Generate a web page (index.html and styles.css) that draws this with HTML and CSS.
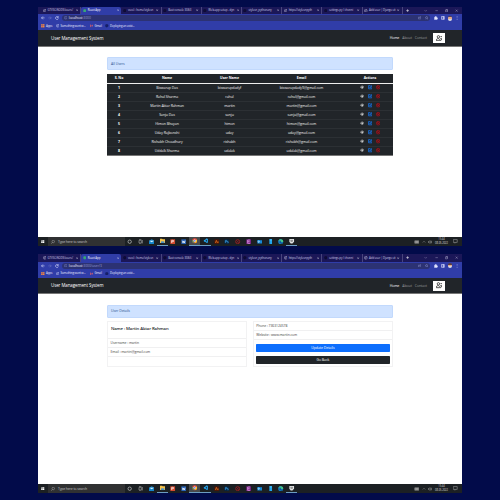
FILE: index.html
```html
<!DOCTYPE html>
<html lang="en">
<head>
<meta charset="utf-8">
<title>User Management System</title>
<link rel="stylesheet" href="styles.css">
</head>
<body>
<section class="window">
  <div class="browser" data-path=":3000"></div>
  <main class="page">
    <div class="alert">All Users</div>
    <table class="users">
      <thead><tr><th class="c-no">S. No</th><th class="c-name">Name</th><th class="c-user">User Name</th><th class="c-mail">Email</th><th>Actions</th></tr></thead>
      <tbody id="rows"></tbody>
    </table>
  </main>
  <footer class="taskbar"></footer>
</section>
<section class="window second">
  <div class="browser" data-path=":3000/user/3"></div>
  <main class="page">
    <div class="alert">User Details</div>
    <div class="cards">
      <div class="card">
        <h5>Name : Martin Aktar Rahman</h5>
        <p>Username : martin</p>
        <p>Email : martin@gmail.com</p>
      </div>
      <div class="card">
        <p>Phone : 7363124578</p>
        <p>Website : www.martin.com</p>
        <div class="buttons"><button class="primary">Update Details</button><button class="dark">Go Back</button></div>
      </div>
    </div>
  </main>
  <footer class="taskbar"></footer>
</section>
<script src="app.js"></script>
</body>
</html>
```
FILE: styles.css
```css
* { box-sizing: border-box; }
body { margin: 0; padding: 7px 38px; width: 500px; height: 500px; overflow: hidden; background: #020b4a; font-family: "Open Sans", "Noto Sans", sans-serif; font-size: 3.6px; letter-spacing: -.06px; line-height: 1; color: #444; display: flex; flex-direction: column; gap: 8px; }
.window { width: 424px; height: 239px; background: #fff; display: flex; flex-direction: column; }
svg { display: block; flex: none; fill: none; stroke: currentColor; stroke-width: 1.6; }
.tabs { height: 7px; background: #1b1758; color: #cfcde6; display: flex; align-items: center; padding-left: 3px; font-size: 2.8px; }
.second .tabs { height: 8px; }
.tab { width: 40.2px; height: 100%; display: flex; align-items: center; padding: 0 2px 0 1.5px; gap: 1.5px; border-right: .5px solid #48447c; }
.tab svg { width: 3.6px; height: 3.6px; }
.tab span { white-space: nowrap; line-height: 5px; }
.tab .x { width: 2.3px; height: 2.3px; margin-left: auto; stroke-width: 2.5; color: #fff; }
.tab.on { background: #303da8; color: #fff; border: 0; border-radius: 2px 2px 0 0; }
.tab .dim { color: #100d38; }
.tab .green { color: #39a778; }
.plus { width: 3.2px; height: 3.2px; margin-left: 3px; color: #fff; }
.win { display: flex; margin-left: auto; gap: 7px; padding-right: 3.5px; color: #d7d5ee; }
.win svg { width: 3.3px; height: 3.3px; }
.bar { height: 8px; background: #303da8; display: flex; align-items: center; padding-left: 3px; color: #e4e6ff; }
.second .bar { height: 7.5px; }
.bar > svg { width: 3.8px; height: 3.8px; margin-right: 3.2px; }
.bar .off { color: #8990d0; }
.omni { width: 368px; height: 6.4px; border-radius: 4px; background: #2c3273; display: flex; align-items: center; padding: 0 1.5px 0 2px; gap: 1.5px; color: #eceeff; font-size: 3.4px; }
.omni svg { width: 3.4px; height: 3.4px; color: #a0a6dc; }
.omni i { font-style: normal; color: #9599cc; margin-left: -1.5px; }
.omni .r { margin-left: auto; margin-right: 2.2px; }
.ext { display: flex; align-items: center; gap: 3.2px; margin-left: 4.3px; }
.ext svg { width: 3.8px; height: 3.8px; }
.avatar { width: 4px; height: 5px; border-radius: 2px; background: linear-gradient(#604039 30%, #e0a98f 30% 65%, #d8d8e0 65%); }
.marks { height: 8px; background: #303da8; color: #dde0ff; display: flex; align-items: center; padding-left: 3px; font-size: 2.9px; letter-spacing: -.12px; white-space: nowrap; }
.marks div { display: flex; align-items: center; gap: 1.5px; }
.marks svg { width: 3.5px; height: 3.5px; }
.marks .apps { width: 14.5px; color: #f06d55; }
.marks .some { width: 34px; }
.marks .gmail { width: 15.5px; color: #f06464; }
.marks span { color: #eceeff; }
.marks .gh svg { color: #172069; }
.nav { height: 16.5px; background: #212529; color: #ddd; display: flex; align-items: center; padding: .5px 17px 0 13px; border-bottom: .5px solid #777; }
.brand { font-size: 4.4px; color: #fff; }
.links { display: flex; gap: 3px; margin-left: auto; margin-right: 6px; color: #96989a; font-size: 3.5px; }
.links b { font-weight: 400; color: #fff; }
.add { width: 12px; height: 10px; background: #fff; display: flex; align-items: center; justify-content: center; color: #222; }
.add svg { width: 6.5px; height: 6.5px; stroke-width: 1.9; }
.page { flex: 1; padding: 10.5px 69px 0; }
.alert { height: 13px; background: #cfe2ff; border: .5px solid #c2d9fc; border-radius: 1px; color: #2c5390; padding-left: 3px; font-size: 3.5px; display: flex; align-items: center; }
.users { width: 286px; margin-top: 3.5px; border-collapse: separate; border-spacing: 0; table-layout: fixed; background: #212529; color: #f2f2f2; text-align: center; font-size: 3.5px; }
.users th, .users td { padding: 0; height: 9px; vertical-align: middle; }
.users th { height: 10px; color: #fff; border-bottom: 1px solid #eee; font-weight: 700; }
.users td { border-bottom: 1px solid #2c3034; }
.users tr:last-child td { border-bottom-color: #777; }
.c-no { width: 24px; } .c-name { width: 72px; } .c-user { width: 53px; } .c-mail { width: 91px; }
.users td:first-child { font-weight: 700; color: #fff; }
.acts { display: flex; justify-content: center; gap: 3.8px; color: #fff; }
.acts svg { width: 4.4px; height: 4.4px; }
.acts .edit { color: #1677f2; }
.acts .del { color: #e00812; stroke-width: 2; }
.cards { display: flex; gap: 5.5px; margin-top: 3.5px; }
.card { flex: 1; height: 46px; border: 1px solid #f2f2f3; }
.card h5 { margin: 0; height: 17px; padding: 4.2px 3px 0; font-size: 4.3px; letter-spacing: -.12px; font-weight: 600; color: #212529; border-bottom: 1px solid #f0f0f1; }
.card p { margin: 0; height: 9px; padding: 2.2px 2.5px; border-bottom: 1px solid #f0f0f1; white-space: nowrap; font-size: 3.4px; }
.buttons { padding: 4px 2.5px; display: flex; flex-direction: column; gap: 4px; }
.buttons button { height: 8px; border: 0; padding: 0; border-radius: .7px; color: #fff; font: 3.5px/8px "Open Sans", sans-serif; letter-spacing: -.05px; }
.primary { background: #0d6efd; } .dark { background: #212529; }
.taskbar { height: 9px; background: #1c2023; color: #ddd; display: flex; align-items: center; }
.start { width: 10px; padding-left: 3.3px; }
.start svg { width: 3.5px; height: 3.5px; fill: #fff; stroke: none; }
.search { width: 77px; height: 100%; background: #303132; color: #c8c8c8; display: flex; align-items: center; gap: 3px; padding-left: 3px; font-size: 3.4px; letter-spacing: -.12px; }
.search svg { width: 4px; height: 4px; }
.apps-row { display: flex; height: 100%; margin-left: -.5px; }
.app { width: 10.8px; display: flex; align-items: center; justify-content: center; }
.app svg { width: 5.4px; height: 5.4px; }
.app.run { border-bottom: .5px solid #6c9cc2; }
.app.cur { background: #484b4d; }
.tray { margin-left: auto; display: flex; align-items: center; gap: 2.5px; padding-right: 4.5px; color: #bbb; }
.tray svg { width: 4px; height: 4px; }
.tray .kb { width: 5.5px; }
.clock { width: 14px; text-align: center; font-size: 2.6px; line-height: 3.8px; white-space: nowrap; color: #ddd; }
.tray .chat { width: 4.5px; height: 4.5px; margin-left: 2px; }
```
FILE: app.js
```js
const svg = (body, cls = '') => `<svg class="${cls}" viewBox="0 0 16 16">${body}</svg>`;
const X = '<path d="M3 3l10 10M13 3L3 13"/>';
const GLOBE = '<circle cx="8" cy="8" r="6.5"/><path d="M2 6h5l2 3-3 2v3M10 2v3h4"/>';
const DISC = '<circle cx="8" cy="8" r="6.5" fill="currentColor"/>';
const GRID = '<path d="M1 1h6v6H1zM9 1h6v6H9zM1 9h6v6H1zM9 9h6v6H9z"/>';
const USER_EDIT = '<circle cx="6" cy="4.5" r="3"/><path d="M8 14H1v-2c0-3 5-4 7-2M9 14v-2.500l4-4 2 2L11.500 14zM11 4h4.500"/>';

const tabs = [
  ['GTVSC:NODE/users/', GLOBE, ''], ['React App', DISC, 'green'],
  ['vscol : home/stylesn', DISC, 'dim'], ['Bast console 308:3', DISC, 'dim'],
  ['Web-app setup - dyn', DISC, 'dim'], ['stylesn_pythonany', DISC, 'dim'],
  ['https://stylesnpyth', GLOBE, ''], ['settings.py / chonni', DISC, 'dim'],
  ['Add user | Django sit', GLOBE, '']
];

document.querySelectorAll('.browser').forEach(el => {
  el.innerHTML = `
  <div class="tabs">${tabs.map(([t, i, c], n) => `<div class="tab ${n === 1 ? 'on' : ''}">${svg(i, c)}<span>${t}</span>${svg(X, 'x')}</div>`).join('')}
    ${svg('<path stroke-width="2.5" d="M8 1v14M1 8h14"/>', 'plus')}
    <div class="win">${svg('<path d="M3 6l5 5 5-5"/>')}${svg('<path d="M2 8h12"/>')}${svg('<path d="M2 5h9v9H2zM5 5V2h9v9h-3"/>')}${svg(X)}</div></div>
  <div class="bar">${svg('<path stroke-width="2.4" d="M15 8H2M8 2L2 8l6 6"/>')}${svg('<path d="M1 8h13M8 2l6 6-6 6"/>', 'off')}${svg('<path stroke-width="2.4" d="M13 5a6 6 0 1 0 1 5M14 1v5H9"/>')}
    <div class="omni">${svg('<circle cx="8" cy="8" r="6.5"/><path d="M8 7v5M8 4v1.5"/>')}<span>localhost</span><i>${el.dataset.path}</i>${svg('<path d="M8 5H2v9h11v-4M5 11c0-5 3-6 8-6M10 2l4 3-4 3"/>', 'r')}${svg('<path d="M8 1l2 5 5 .5-4 3.500 1.200 5L8 12l-4.200 3L5 10 1 6.500 6 6z"/>')}</div>
    <div class="ext">${svg('<path fill="currentColor" d="M2 5h3c-1-5 6-5 5 0h3v4c4-1 4 5 0 4v2H2z"/>')}${svg('<path stroke-width="2.5" d="M2 2h12v12H2zM9 2v12M11 2v12"/>')}<div class="avatar"></div>${svg('<path stroke-width="3" stroke-dasharray="2 4" d="M9 1v14"/>')}</div></div>
  <div class="marks"><div class="apps">${svg(GRID.replace('/>', ' fill="#e9a83b"/>'))}<span>Apps</span></div><div class="some">${svg(GLOBE)}<span>Something went w...</span></div><div class="gmail">${svg('<path stroke-width="3" d="M2 14V4l6 5 6-5v10"/>')}<span>Gmail</span></div><div class="gh">${svg(DISC)}<span>Deploying an exist...</span></div></div>
  <nav class="nav"><div class="brand">User Management System</div><div class="links"><b>Home</b><span>About</span><span>Contact</span></div><div class="add">${svg(USER_EDIT)}</div></nav>`;
});

const users = [
  ['Biswarup Das', 'biswarupdadyf', 'biswarupdady9@gmail.com'],
  ['Rahul Sharma', 'rahul', 'rahul@gmail.com'],
  ['Martin Aktar Rahman', 'martin', 'martin@gmail.com'],
  ['Sanju Das', 'sanju', 'sanju@gmail.com'],
  ['Himon Bhuyan', 'himon', 'himon@gmail.com'],
  ['Uday Rajbonshi', 'uday', 'uday@gmail.com'],
  ['Rishabh Choudhury', 'rishabh', 'rishabh@gmail.com'],
  ['Uddalk Sharma', 'udalak', 'udalak@gmail.com']
];
const actions = svg('<path d="M1 8c4-6 10-6 14 0-4 6-10 6-14 0z"/><circle cx="8" cy="8" r="2" fill="currentColor"/>')
  + svg('<path stroke-width="2.600" d="M8 2H2v12h12V8M6 10l1-4 6-5 2 2-5 6z"/>', 'edit')
  + svg('<circle cx="8" cy="8" r="6.500"/><path d="M4.500 4.500l7 7M11.500 4.500l-7 7"/>', 'del');
document.getElementById('rows').innerHTML = users.map((u, i) =>
  `<tr><td>${i + 1}</td>${u.map(v => `<td>${v}</td>`).join('')}<td><div class="acts">${actions}</div></td></tr>`).join('');

const tile = (bg, mark, fg = '#fff') => `<rect x="1" y="1" width="14" height="14" fill="${bg}" stroke="none"/><path stroke="${fg}" stroke-width="2" d="${mark}"/>`;
const apps = [
  ['<circle cx="8" cy="8" r="5" stroke="#eee"/>', ''],
  ['<path stroke="#bbb" d="M3 4h7v8H3zM13 3v10M3 1h7M3 15h7"/>', ''],
  ['<path stroke="none" fill="#1685c9" d="M0 5l8-4 8 4v10H0z"/><path stroke="none" fill="#d9f2ff" d="M1 5h14l-7 5z"/>', ''],
  ['<path stroke="none" fill="#f6c34c" d="M0 2h6l2 2h8v11H0z"/><path stroke="none" fill="#478fc5" d="M3 10h10v5H3z"/>', 'run'],
  [tile('#d44a2e', 'M5 12V4h4a2 2 0 0 1 0 4H5'), ''],
  [tile('#2862b5', 'M4 5l2 7 2-6 2 6 2-7'), ''],
  ['<circle cx="8" cy="8" r="7.500" fill="#e84435" stroke="none"/><path stroke="none" fill="#38a556" d="M1 5l7 10C1 15-1 9 1 5"/><path stroke="none" fill="#fbc116" d="M15 5c2 6-2 10-7 10l4-10z"/><circle cx="8" cy="8" r="3" fill="#4285f4" stroke="#fff"/>', 'cur run'],
  ['<path stroke="#23a4ee" stroke-width="3" d="M12 2L3 10M12 14L3 6M13 2v12"/>', 'run'],
  [tile('#481609', 'M4 12l3-8 3 8M12 7v5', '#f17b20'), ''],
  [tile('#07233e', 'M4 12V4h4v4H4M13 7h-3l3 4h-3', '#3a9de3'), ''],
  ['<circle cx="8" cy="8" r="6" stroke="#9d2023" stroke-width="2.500"/><path stroke="#9d2023" d="M4 4l8 8M12 4l-8 8"/>', ''],
  [tile('#772282', 'M5 13V3h7M5 8h6M5 13h7', '#e6a6ee'), ''],
  ['<path stroke="none" fill="#1689d7" d="M1 3h8v10H1zM9 4h6v9H9z"/><circle cx="5" cy="8" r="2" stroke="#fff"/>', ''],
  ['<path stroke="none" fill="#22a6ed" d="M4 0h8v16H4z"/><path stroke="#8be1ff" d="M5 3h6"/>', ''],
  ['<circle cx="8" cy="8" r="7.500" fill="#147fc5" stroke="none"/><path stroke="none" fill="#48c986" d="M3 2c7-4 14 1 12 7H9c2-4-3-6-8-3z"/><path stroke="#0b365e" stroke-width="2" d="M7 7c-3 4 2 7 6 5"/>', ''],
  ['<path stroke="none" fill="#e1e3e4" d="M1 3h14v8l-5 5H5L1 11z"/><path stroke="#444" d="M4 7h8M5 10h6"/>', 'run']
];
document.querySelectorAll('.taskbar').forEach(el => {
  el.innerHTML = `<div class="start">${svg('<path d="M1 2l6-1v6H1zM8 1h7v6H8zM1 8h6v7l-6-1zM8 8h7v7H8z"/>')}</div>
  <div class="search">${svg('<circle cx="9" cy="6" r="5"/><path d="M5 10l-4 5"/>')}<span>Type here to search</span></div>
  <div class="apps-row">${apps.map(([b, c]) => `<div class="app ${c}">${svg(b)}</div>`).join('')}</div>
  <div class="tray">${svg('<path fill="#777" d="M0 3h16v10H0zM3 6h10M3 10h10"/>', 'kb')}${svg('<path d="M3 10l5-5 5 5"/>')}${svg('<path d="M1 6h3l4-4v12l-4-4H1zM11 5v6M14 3v10"/>')}<div class="clock">15:44<br>08-05-2022</div>${svg('<path d="M1 2h14v10H9l-2 3v-3H1z"/>', 'chat')}</div>`;
});
```
